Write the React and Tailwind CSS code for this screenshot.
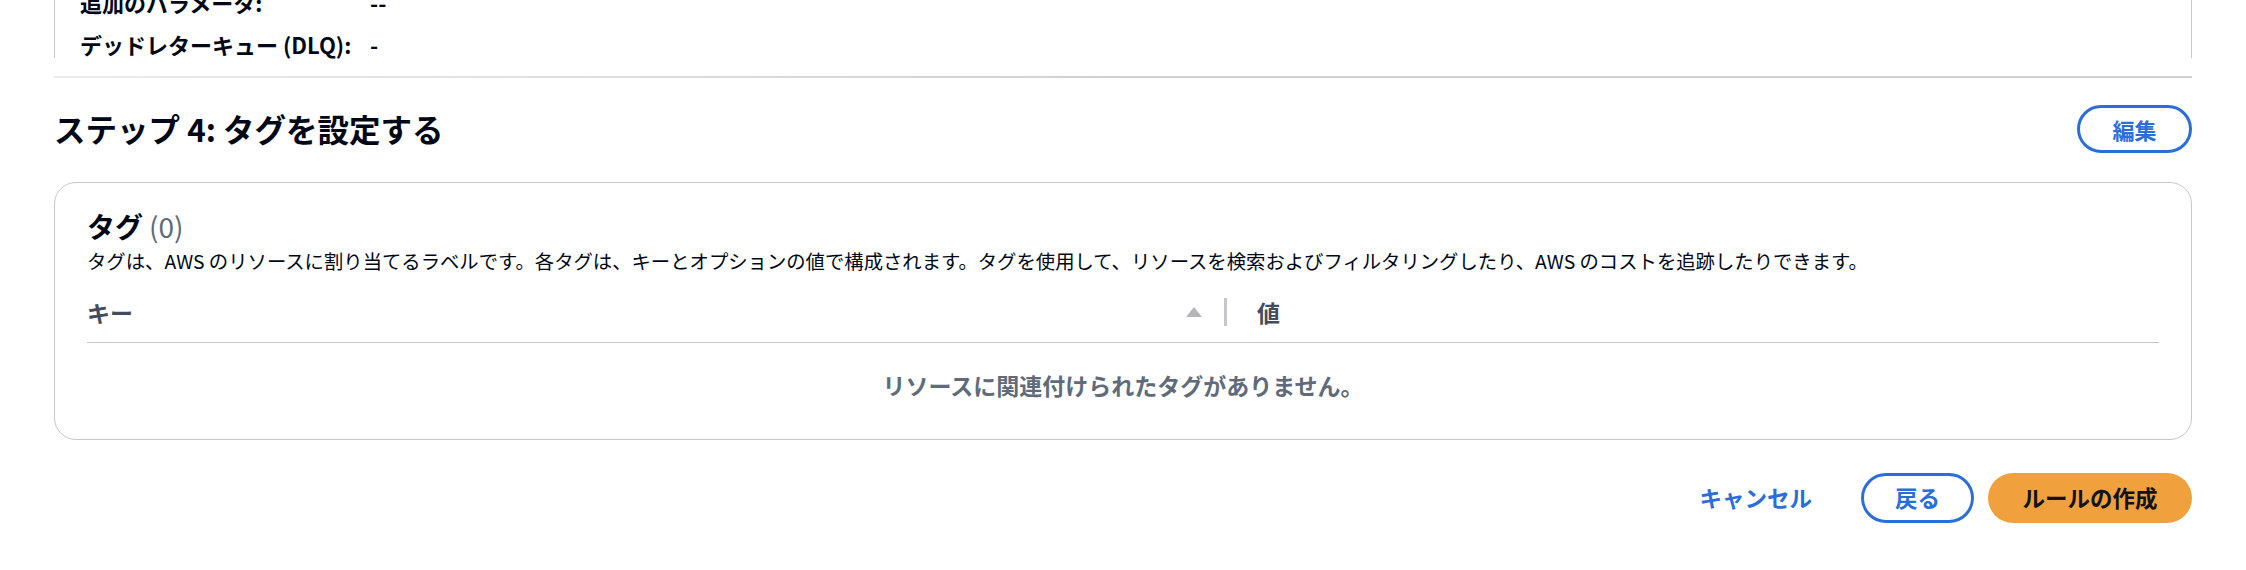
import React from "react";

const details = [
  { label: "追加のパラメータ:", value: "--" },
  { label: "デッドレターキュー (DLQ):", value: "-" },
];

function App() {
  return (
    <div className="w-full h-[570px] overflow-hidden bg-white px-[54px] font-['Noto_Sans_CJK_JP','Noto_Sans',sans-serif] text-[#000716]">
      {/* previous step card, scrolled off the top */}
      <div className="flex h-[58px] flex-col border-x border-[#c6c6cd] pl-[25px]">
        <div className="-mt-[19px] flex flex-col">
          {details.map((d) => (
            <div key={d.label} className="flex h-[42px] items-center text-[22px] font-bold leading-none">
              <span className="w-[290px]">{d.label}</span>
              <span>{d.value}</span>
            </div>
          ))}
        </div>
      </div>
      <div className="mt-[18px] h-[2px] bg-gradient-to-r from-[#ececf0] via-[#cfcfd5] to-[#cfcfd5]" />

      {/* step 4 heading */}
      <div className="mt-[27px] flex h-[48px] items-center justify-between">
        <h2 className="text-[31.5px] font-bold leading-none">ステップ 4: タグを設定する</h2>
        <button className="h-[48px] w-[115px] rounded-full border-[3px] border-[#2a6edb] text-[22px] font-bold text-[#2a6edb]">
          編集
        </button>
      </div>

      {/* tags container */}
      <div className="mt-[29px] h-[258px] rounded-[22px] border border-[#c6c6cd] px-[32px] pt-[27px]">
        <div className="flex h-[32px] items-center gap-[6px]">
          <span className="text-[28px] font-bold">タグ</span>
          <span className="text-[28px] text-[#5f6b7a]">(0)</span>
        </div>
        <p className="mt-[5px] flex h-[28px] items-center text-[19.35px] text-[#000716]">
          タグは、AWS のリソースに割り当てるラベルです。各タグは、キーとオプションの値で構成されます。タグを使用して、リソースを検索およびフィルタリングしたり、AWS のコストを追跡したりできます。
        </p>

        <div className="mt-[17px] border-b border-[#c6c6cd] pb-[10px]">
          <div className="flex h-[40px] items-center text-[23px] font-bold text-[#414d5c]">
            <div className="flex w-[1137px] items-center justify-between pr-[22px]">
              <span>キー</span>
              <svg width="16" height="10" viewBox="0 0 16 10">
                <path d="M8 0 L16 10 L0 10 Z" fill="#b4b4bb" />
              </svg>
            </div>
            <div className="h-[28px] w-[3px] bg-[#c6c6cd]" />
            <span className="pl-[30px]">値</span>
          </div>
        </div>

        <div className="flex h-[84px] items-center justify-center text-[23px] font-bold text-[#5f6b7a]">
          リソースに関連付けられたタグがありません。
        </div>
      </div>

      {/* footer actions */}
      <div className="mt-[33px] flex items-center justify-end">
        <button className="mr-[49px] text-[22.5px] font-bold text-[#2a6edb]">キャンセル</button>
        <button className="mr-[14px] h-[50px] w-[113px] rounded-full border-[3px] border-[#2a6edb] text-[22.5px] font-bold text-[#2a6edb]">
          戻る
        </button>
        <button className="h-[50px] w-[204px] rounded-full bg-[#f0a03c] text-[22.5px] font-bold text-[#0f141a]">
          ルールの作成
        </button>
      </div>
    </div>
  );
}

export default App;
